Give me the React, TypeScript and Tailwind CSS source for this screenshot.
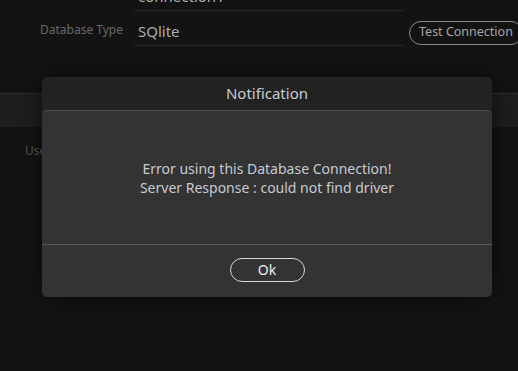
export default function App() {
  return (
    <div className="relative h-[371px] w-[518px] overflow-hidden bg-[#131313] font-['Noto_Sans',sans-serif]">
      <div className="-mt-[24px]">
        <div className="grid grid-cols-[123px_281px_auto] items-center">
          <div className="flex h-[35px] items-end justify-end pb-[7px] text-[12px] text-[#666]">Name</div>
          <div className="ml-[11px] flex h-[35px] items-end border-b border-[#262626] pb-[3px] pl-[4px] text-[15px] text-[#ababab]">
            connection1
          </div>
          <div />
          <div className="flex h-[35px] items-end justify-end pb-[7px] text-[12px] text-[#676767]">Database Type</div>
          <div className="ml-[11px] flex h-[35px] items-end border-b border-[#262626] pb-[3px] pl-[4px] text-[15px] text-[#acacac]">
            SQlite
          </div>
          <div className="flex items-center pl-[5px] pt-[8px]">
            <button className="h-[24px] whitespace-nowrap rounded-full border border-[#8a8a8a] px-[9px] text-[12.5px] leading-none text-[#a5a5a5]">
              Test Connection
            </button>
          </div>
        </div>
      </div>
      <div className="mt-[47px] h-[34px] border-t border-[#2e2e2e] bg-[#1e1e1e]" />
      <div className="pl-[25px] pt-[15px] text-[12px] text-[#565656]">User</div>

      <div className="absolute left-[42px] top-[77px] flex h-[220px] w-[450px] flex-col rounded-[5px] bg-[#222222] shadow-[0_0_24px_rgba(0,0,0,0.55)]">
        <div className="flex h-[33px] items-center justify-center text-[15px] text-[#c9ccd3]">Notification</div>
        <div className="flex flex-1 flex-col rounded-[5px] border-t border-[#4e4e4e] bg-[#333333]">
          <div className="flex h-[133px] flex-col items-center justify-center text-[14px] leading-[19px] text-[#c6cad2]">
            <p>Error using this Database Connection!</p>
            <p>Server Response : could not find driver</p>
          </div>
          <div className="flex flex-1 items-center justify-center border-t border-[#585858] pb-[2px]">
            <button className="h-[24px] w-[75px] rounded-full border border-[#d8d8d8] text-[14px] leading-none text-[#eeeeee]">
              Ok
            </button>
          </div>
        </div>
      </div>
    </div>
  )
}
